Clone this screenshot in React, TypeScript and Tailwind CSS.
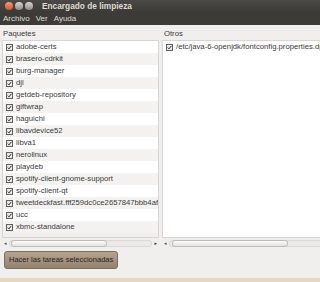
import React from "react";

const paquetes = [
  "adobe-certs",
  "brasero-cdrkit",
  "burg-manager",
  "djl",
  "getdeb-repository",
  "giftwrap",
  "haguichi",
  "libavdevice52",
  "libva1",
  "nerolinux",
  "playdeb",
  "spotify-client-gnome-support",
  "spotify-client-qt",
  "tweetdeckfast.fff259dc0ce2657847bbb4afft",
  "ucc",
  "xbmc-standalone",
];

const otros = ["/etc/java-6-openjdk/fontconfig.properties.dpkg-old"];

function Check() {
  return (
    <span className="flex h-[7px] w-[7px] shrink-0 items-center justify-center border border-[#5f5f5f] bg-[#e9e9e9]">
      <svg viewBox="0 0 8 8" className="h-[7px] w-[7px]">
        <path d="M1.2 4.2 L3.2 6.2 L6.8 1.4" fill="none" stroke="#2d2d2d" strokeWidth="1.6" />
      </svg>
    </span>
  );
}

function Row({ label, odd }: { label: string; odd: boolean }) {
  return (
    <div className={`flex h-[12px] items-center gap-[3px] pl-[3px] ${odd ? "bg-[#f3f2f0]" : "bg-white"}`}>
      <Check />
      <span className="whitespace-nowrap text-[7.7px] leading-none text-[#3a3a3a]">{label}</span>
    </div>
  );
}

function HScroll({ thumbStart, thumbWidth }: { thumbStart: number; thumbWidth: number }) {
  return (
    <div className="flex h-[10px] items-center gap-[2px] bg-[#f0efed] px-[2px]">
      <span className="text-[5px] leading-none text-[#555]">◂</span>
      <div className="relative h-[7px] flex-1 rounded-[3px] border border-[#d9d8d5] bg-[#ebeae8]">
        <div
          className="absolute top-[-1px] h-[7px] rounded-[3px] border border-[#bdbcb8] bg-gradient-to-b from-[#fbfbfa] to-[#e3e2df]"
          style={{ left: thumbStart, width: thumbWidth }}
        />
      </div>
      <span className="text-[5px] leading-none text-[#333]">▸</span>
    </div>
  );
}

export default function App() {
  return (
    <div
      className="flex h-[282px] w-[320px] flex-col overflow-hidden bg-[#f0efed]"
      style={{ fontFamily: '"Liberation Sans", "DejaVu Sans", sans-serif' }}
    >
      <div className="flex h-[12px] items-center gap-[2px] bg-gradient-to-b from-[#4a4945] to-[#3c3b37] pl-[5px]">
        <span className="h-[8px] w-[8px] rounded-full bg-gradient-to-b from-[#f59a6a] to-[#d9522a]" />
        <span className="h-[8px] w-[8px] rounded-full bg-gradient-to-b from-[#d8d7d3] to-[#8e8c86]" />
        <span className="h-[8px] w-[8px] rounded-full bg-gradient-to-b from-[#d8d7d3] to-[#8e8c86]" />
        <span className="ml-[7px] text-[8.3px] font-bold leading-none text-[#dfdbd2]">Encargado de limpieza</span>
      </div>
      <div className="flex h-[13px] items-center gap-[6px] bg-[#3c3b37] pl-[3px] text-[8px] leading-none text-[#dfdbd2]">
        <span>Archivo</span>
        <span>Ver</span>
        <span>Ayuda</span>
      </div>

      <div className="flex flex-1 flex-col px-[2px] pt-[3px]">
        <div className="flex h-[220px] gap-[3px]">
          <div className="flex w-[157px] flex-col">
            <div className="h-[12px] pl-[1px] text-[7.7px] leading-[12px] text-[#3a3a3a]">Paquetes</div>
            <div className="flex flex-1 flex-col overflow-hidden border border-[#d6d5d2]">
              {paquetes.map((p, i) => (
                <Row key={p} label={p} odd={i % 2 === 1} />
              ))}
            </div>
            <HScroll thumbStart={1} thumbWidth={96} />
          </div>
          <div className="flex flex-1 flex-col">
            <div className="h-[12px] pl-[2px] text-[7.7px] leading-[12px] text-[#3a3a3a]">Otros</div>
            <div className="flex flex-1 flex-col overflow-hidden border border-[#d6d5d2] bg-white">
              {otros.map((p) => (
                <Row key={p} label={p} odd={false} />
              ))}
            </div>
            <HScroll thumbStart={2} thumbWidth={116} />
          </div>
        </div>

        <div className="mt-[3px] flex">
          <button
            type="button"
            className="ml-[2px] h-[18px] rounded-[3px] border border-[#7d6e5c] bg-gradient-to-b from-[#b4a491] to-[#93826e] px-[4px] text-[7.5px] leading-none text-[#2b2218]"
          >
            Hacer las tareas seleccionadas
          </button>
        </div>
      </div>
      <div className="h-[4px] bg-[#e6d6c4]" />
    </div>
  );
}
